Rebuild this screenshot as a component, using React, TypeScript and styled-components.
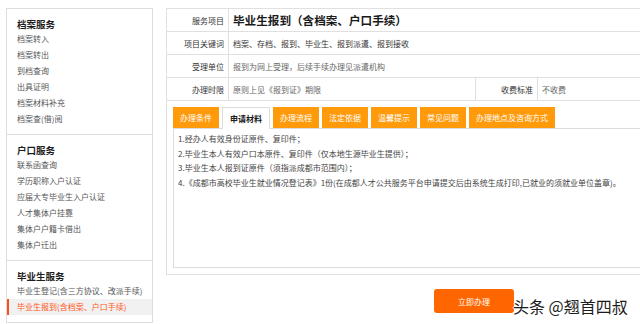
import styled, { createGlobalStyle } from "styled-components";

const GlobalStyle = createGlobalStyle`
    *, *::before, *::after {
        box-sizing: border-box;
    }

    html, body {
        margin: 0;
        padding: 0;
        background: #fff;
        overflow: hidden;
    }

    body {
        width: 640px;
        height: 324px;
        font-family: "Noto Sans CJK SC", "Noto Sans", sans-serif;
        color: #333;
    }
`;

const Page = styled.div`
    position: relative;
    display: flex;
    align-items: flex-start;
    gap: 13px;
    width: 640px;
    padding: 8px 0 0 6px;
`;

const Sidebar = styled.aside`
    width: 147px;
    flex-shrink: 0;
    border: 1px solid #dedede;
    border-bottom: none;
`;

const Section = styled.section`
    padding: 8px 0 7px;
    border-bottom: 1px solid #dedede;
`;

const SectionTitle = styled.div`
    padding-left: 10px;
    font-size: 9.5px;
    font-weight: 700;
    line-height: 14px;
    color: #1e1e1e;
`;

const NavItem = styled.div<{ $active?: boolean }>`
    padding-left: 8px;
    border-left: 2px solid ${(p) => (p.$active ? "#ff4d1c" : "transparent")};
    background: ${(p) => (p.$active ? "#f1f1f1" : "transparent")};
    color: ${(p) => (p.$active ? "#ff5722" : "#555")};
    font-size: 8px;
    line-height: 16px;
    white-space: nowrap;
`;

const Main = styled.main`
    flex: 1;
    min-width: 0;
    display: flex;
    flex-direction: column;
    align-items: flex-start;
`;

/* the table carries on past the right edge of the shot, so no right border */
const Table = styled.div`
    width: 100%;
    border: 1px solid #e0e0e0;
    border-right: none;
`;

const Row = styled.div`
    display: flex;
    height: 23px;
    border-bottom: 1px solid #e0e0e0;
`;

const Label = styled.div`
    width: 62px;
    flex-shrink: 0;
    display: flex;
    align-items: center;
    justify-content: flex-end;
    padding-right: 4px;
    border-right: 1px solid #e0e0e0;
    font-size: 8px;
    color: #333;
    white-space: nowrap;
`;

const Value = styled.div<{ $width?: number; $tone?: string }>`
    ${(p) => (p.$width ? `width: ${p.$width}px; flex-shrink: 0; border-right: 1px solid #e0e0e0;` : "flex: 1;")}
    display: flex;
    align-items: center;
    padding-left: 4px;
    font-size: 8px;
    color: ${(p) => p.$tone ?? "#444"};
    white-space: nowrap;
`;

const Title = styled.h1`
    margin: 0;
    font-size: 11.6px;
    font-weight: 700;
    color: #1a1a1a;
    white-space: nowrap;
`;

const TabCell = styled.div`
    padding: 6px 0 6px 6px;
`;

const Tabs = styled.div`
    display: flex;
    gap: 3px;
    height: 21px;
`;

const Tab = styled.div<{ $active?: boolean }>`
    height: ${(p) => (p.$active ? "22px" : "21px")};
    padding: 0 7px;
    line-height: 21px;
    font-size: 8px;
    white-space: nowrap;
    position: relative;
    z-index: 1;
    background: ${(p) => (p.$active ? "#fff" : "#ff9a0a")};
    color: ${(p) => (p.$active ? "#1a1a1a" : "#fff")};
    font-weight: ${(p) => (p.$active ? 700 : 400)};
    border: ${(p) => (p.$active ? "1px solid #dcdcdc" : "none")};
    border-bottom: none;
`;

const TabBody = styled.div`
    height: 140px;
    padding: 3px 4px;
    border: 1px solid #dcdcdc;
    border-right: none;
    font-size: 8px;
    line-height: 14.7px;
    color: #444;
    white-space: nowrap;
    overflow: hidden;
`;

const Line = styled.div``;

const SubmitButton = styled.button`
    margin: 14px 0 0 268px;
    width: 80px;
    height: 24px;
    border: none;
    border-radius: 3px;
    background: #ff6600;
    color: #fff;
    font-family: inherit;
    font-size: 8px;
    cursor: pointer;
`;

const Watermark = styled.div`
    position: absolute;
    left: 513px;
    top: 296px;
    font-size: 16px;
    line-height: 20px;
    color: #1c1c1c;
    white-space: nowrap;
    text-shadow: 1px 0 0 #fff, -1px 0 0 #fff, 0 1px 0 #fff, 0 -1px 0 #fff;
`;

const sections = [
    {
        title: "档案服务",
        items: ["档案转入", "档案转出", "到档查询", "出具证明", "档案材料补充", "档案查(借)阅"],
    },
    {
        title: "户口服务",
        items: ["联系函查询", "学历职称入户认证", "应届大专毕业生入户认证", "人才集体户挂靠", "集体户户籍卡借出", "集体户迁出"],
    },
    {
        title: "毕业生服务",
        items: ["毕业生登记(含三方协议、改派手续)", "毕业生报到(含档案、户口手续)"],
    },
];

const tabs = ["办理条件", "申请材料", "办理流程", "法定依据", "温馨提示", "常见问题", "办理地点及咨询方式"];

const materials = [
    "1.经办人有效身份证原件、复印件；",
    "2.毕业生本人有效户口本原件、复印件（仅本地生源毕业生提供）；",
    "3.毕业生本人报到证原件（须指派成都市范围内）；",
    "4.《成都市高校毕业生就业情况登记表》1份(在成都人才公共服务平台申请提交后由系统生成打印,已就业的须就业单位盖章)。",
];

const App = () => {
    return (
        <>
            <GlobalStyle />
            <Page>
                <Sidebar>
                    {sections.map((section) => (
                        <Section key={section.title}>
                            <SectionTitle>{section.title}</SectionTitle>
                            {section.items.map((item) => (
                                <NavItem key={item} $active={item === "毕业生报到(含档案、户口手续)"}>
                                    {item}
                                </NavItem>
                            ))}
                        </Section>
                    ))}
                </Sidebar>
                <Main>
                    <Table>
                        <Row>
                            <Label>服务项目</Label>
                            <Value>
                                <Title>毕业生报到（含档案、户口手续）</Title>
                            </Value>
                        </Row>
                        <Row>
                            <Label>项目关键词</Label>
                            <Value $tone="#333">档案、存档、报到、毕业生、报到派遣、报到接收</Value>
                        </Row>
                        <Row>
                            <Label>受理单位</Label>
                            <Value $tone="#666">报到为网上受理，后续手续办理见派遣机构</Value>
                        </Row>
                        <Row>
                            <Label>办理时限</Label>
                            <Value $width={247} $tone="#666">原则上见《报到证》期限</Value>
                            <Label>收费标准</Label>
                            <Value $tone="#666">不收费</Value>
                        </Row>
                        <TabCell>
                            <Tabs>
                                {tabs.map((tab) => (
                                    <Tab key={tab} $active={tab === "申请材料"}>
                                        {tab}
                                    </Tab>
                                ))}
                            </Tabs>
                            <TabBody>
                                {materials.map((line) => (
                                    <Line key={line}>{line}</Line>
                                ))}
                            </TabBody>
                        </TabCell>
                    </Table>
                    <SubmitButton>立即办理</SubmitButton>
                </Main>
                <Watermark>头条 @翘首四叔</Watermark>
            </Page>
        </>
    );
};

export default App;
